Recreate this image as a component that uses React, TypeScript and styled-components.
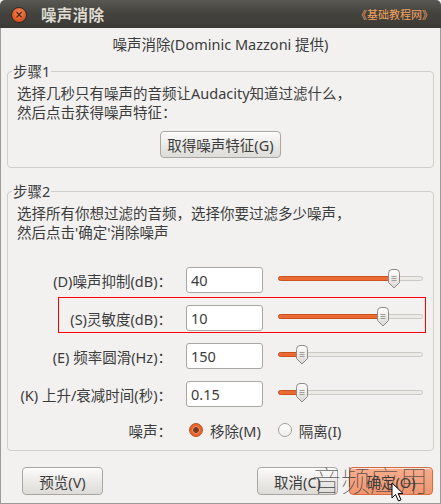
import React from 'react';
import styled, { createGlobalStyle, css } from 'styled-components';

const GlobalStyle = createGlobalStyle`
  html, body {
    margin: 0;
    padding: 0;
    background: #f2f1f0;
  }
  body {
    font-family: "Noto Sans", "Noto Sans CJK SC", sans-serif;
  }
`;

const Window = styled.div`
  position: relative;
  width: 441px;
  height: 504px;
  display: flex;
  flex-direction: column;
  overflow: hidden;
  color: #3c3c3c;
  font-family: "Noto Sans", "Noto Sans CJK SC", sans-serif;
  font-size: 14.5px;
`;

const TitleBar = styled.div`
  height: 28px;
  flex: none;
  display: flex;
  align-items: center;
  padding: 0 8px 0 11px;
  border-radius: 5px 5px 0 0;
  background: linear-gradient(#595852, #44433e 45%, #3b3a36);
`;

const CloseButton = styled.span`
  width: 16px;
  height: 16px;
  margin-top: 2px;
  border-radius: 50%;
  box-sizing: border-box;
  border: 1px solid #2f2b28;
  background: radial-gradient(circle at 50% 35%, #f48a5a, #df5a26 60%, #c2461a);
  display: flex;
  align-items: center;
  justify-content: center;
  color: #4a2414;
  font-size: 10px;
  line-height: 1;
  font-family: "DejaVu Sans", sans-serif;
  font-weight: bold;
`;

const WindowTitle = styled.span`
  margin-left: 14px;
  color: #dfdbd2;
  font-size: 15.5px;
  font-weight: bold;
  letter-spacing: 0.3px;
`;

const SiteMark = styled.span`
  margin-left: auto;
  color: #f2a35e;
  font-size: 11px;
`;

const Body = styled.div`
  flex: 1;
  display: flex;
  flex-direction: column;
  background: #f2f1f0;
  border: 1px solid #9d9b97;
  border-top: none;
`;

const Subtitle = styled.div`
  margin-top: 6px;
  text-align: center;
  line-height: 20px;
`;

const Group = styled.fieldset<{ $gap: number }>`
  margin: ${(p) => p.$gap}px 6px 0;
  padding: 3px 9px 9px;
  border: 1px solid #d0cec9;
  border-radius: 4px;
  min-width: 0;
`;

const Legend = styled.legend`
  margin-left: -5px;
  padding: 0 1px;
  line-height: 20px;
`;

const Desc = styled.div`
  line-height: 19px;
  white-space: nowrap;
`;

const Center = styled.div`
  display: flex;
  justify-content: center;
  margin-top: 9px;
`;

const Button = styled.button<{ $primary?: boolean; $w?: number }>`
  height: 27px;
  ${(p) => p.$w && css`width: ${p.$w}px;`}
  padding: 0 6px;
  font: inherit;
  color: #3c3c3c;
  border-radius: 4px;
  border: 1px solid ${(p) => (p.$primary ? '#d66c43' : '#a9a7a2')};
  background: ${(p) =>
    p.$primary
      ? 'linear-gradient(#f7ad8d, #f0956f)'
      : 'linear-gradient(#fbfbfa, #ebe9e6 55%, #dedcd8)'};
  box-shadow: inset 0 1px 0 rgba(255, 255, 255, 0.7);
  white-space: nowrap;
`;

const Rows = styled.div`
  margin-top: 25px;
  display: flex;
  flex-direction: column;
  gap: 12px;
`;

const Row = styled.div<{ $marked?: boolean }>`
  position: relative;
  display: flex;
  align-items: center;
  height: 26px;
  ${(p) =>
    p.$marked &&
    css`
      &::after {
        content: '';
        position: absolute;
        left: 41px;
        right: -2px;
        top: -8px;
        bottom: -2px;
        border: 1px solid #ff0000;
        pointer-events: none;
      }
    `}
`;

const RadioRow = styled(Row)`
  height: 22px;
`;

const Label = styled.span`
  width: 155px;
  flex: none;
  text-align: right;
  white-space: nowrap;
`;

const Field = styled.input`
  width: 77px;
  height: 26px;
  margin: 0 0 0 14px;
  box-sizing: border-box;
  padding: 0 4px;
  font: inherit;
  color: #3c3c3c;
  background: #fff;
  border: 1px solid #a9a7a2;
  border-radius: 3px;
  outline: none;
`;

const SliderBox = styled.div`
  position: relative;
  width: 145px;
  height: 26px;
  margin-left: 15px;
`;

const Track = styled.div`
  position: absolute;
  left: 0;
  right: 0;
  top: 9px;
  height: 5px;
  box-sizing: border-box;
  border-radius: 3px;
  background: #ebeae7;
  border: 1px solid #cbc9c4;
`;

const Fill = styled.div`
  position: absolute;
  left: -1px;
  top: -1px;
  bottom: -1px;
  border-radius: 3px;
  background: #ec6a33;
  border: 1px solid #c9541f;
  box-sizing: border-box;
`;

const Thumb = styled.svg`
  position: absolute;
  top: 2px;
  width: 14px;
  height: 20px;
  margin-left: -7px;
`;

const Radio = styled.span<{ $on?: boolean }>`
  width: 14px;
  height: 14px;
  flex: none;
  box-sizing: border-box;
  border-radius: 50%;
  border: 1px solid ${(p) => (p.$on ? '#b9521f' : '#a3a19c')};
  background: ${(p) =>
    p.$on
      ? 'radial-gradient(circle, #7a3b22 0 2.6px, #f3a07c 3.2px, #e8632c 4.2px, #e8632c)'
      : 'linear-gradient(#ffffff, #eeedea)'};
`;

const RadioText = styled.span<{ $first?: boolean }>`
  margin-left: 7px;
  white-space: nowrap;
`;

const RadioGap = styled.span`
  width: 17px;
  flex: none;
`;

const Footer = styled.div`
  margin-top: 16px;
  display: flex;
  align-items: center;
  gap: 11px;
  padding: 0 7px 0 21px;
  & > button {
    height: 28px;
  }
`;

const Spacer = styled.span`
  flex: 1;
`;

const Watermark = styled.div`
  position: absolute;
  left: 312px;
  top: 458px;
  font-family: "Noto Sans CJK SC", sans-serif;
  font-size: 29px;
  font-weight: 100;
  letter-spacing: 0px;
  color: rgba(60, 60, 60, 0.8);
  pointer-events: none;
  white-space: nowrap;
`;

const Cursor = styled.svg`
  position: absolute;
  left: 391px;
  top: 482px;
  width: 13px;
  height: 20px;
`;

type Setting = { label: string; value: string; pos: number; marked?: boolean };

const settings: Setting[] = [
  { label: '(D)噪声抑制(dB)：', value: '40', pos: 0.8 },
  { label: '(S)灵敏度(dB)：', value: '10', pos: 0.725, marked: true },
  { label: '(E) 频率圆滑(Hz)：', value: '150', pos: 0.166 },
  { label: '(K) 上升/衰减时间(秒)：', value: '0.15', pos: 0.166 },
];

function Slider({ pos }: { pos: number }) {
  const x = Math.round(145 * pos);
  return (
    <SliderBox>
      <Track>
        <Fill style={{ width: x + 1 }} />
      </Track>
      <Thumb viewBox="0 0 14 20" style={{ left: x }}>
        <defs>
          <linearGradient id="thumbGrad" x1="0" y1="0" x2="0" y2="1">
            <stop offset="0" stopColor="#ffffff" />
            <stop offset="1" stopColor="#d9d7d2" />
          </linearGradient>
        </defs>
        <path
          d="M1.5 4.5 Q1.5 0.5 5 0.5 H9 Q12.5 0.5 12.5 4.5 V13.5 L7 19 L1.5 13.5 Z"
          fill="url(#thumbGrad)"
          stroke="#8d8b86"
        />
        <path d="M4.5 7.5 H9.5 M4.5 9.5 H9.5 M4.5 11.5 H9.5" stroke="#a09e99" strokeWidth="1" />
      </Thumb>
    </SliderBox>
  );
}

export default function App() {
  return (
    <>
      <GlobalStyle />
      <Window>
        <TitleBar>
          <CloseButton>×</CloseButton>
          <WindowTitle>噪声消除</WindowTitle>
          <SiteMark>《基础教程网》</SiteMark>
        </TitleBar>
        <Body>
          <Subtitle>噪声消除(Dominic Mazzoni 提供)</Subtitle>

          <Group $gap={7}>
            <Legend>步骤1</Legend>
            <Desc>
              选择几秒只有噪声的音频让Audacity知道过滤什么，
              <br />
              然后点击获得噪声特征：
            </Desc>
            <Center>
              <Button>取得噪声特征(G)</Button>
            </Center>
          </Group>

          <Group $gap={13}>
            <Legend>步骤2</Legend>
            <Desc>
              选择所有你想过滤的音频，选择你要过滤多少噪声，
              <br />
              然后点击'确定'消除噪声
            </Desc>
            <Rows>
              {settings.map((s) => (
                <Row key={s.label} $marked={s.marked}>
                  <Label>{s.label}</Label>
                  <Field defaultValue={s.value} />
                  <Slider pos={s.pos} />
                </Row>
              ))}
              <RadioRow>
                <Label>噪声：</Label>
                <RadioGap />
                <Radio $on />
                <RadioText>移除(M)</RadioText>
                <RadioGap />
                <Radio />
                <RadioText>隔离(I)</RadioText>
              </RadioRow>
            </Rows>
          </Group>

          <Footer>
            <Button $w={81}>预览(V)</Button>
            <Spacer />
            <Button $w={81}>取消(C)</Button>
            <Button $w={84} $primary>
              确定(O)
            </Button>
          </Footer>
        </Body>
        <Watermark>音频应用</Watermark>
        <Cursor viewBox="0 0 13 20">
          <path
            d="M1 1 V16 L4.5 12.5 L7.5 19 L10 17.8 L7.2 11.5 H12 Z"
            fill="#ffffff"
            stroke="#000000"
            strokeWidth="1"
            strokeLinejoin="round"
          />
        </Cursor>
      </Window>
    </>
  );
}
